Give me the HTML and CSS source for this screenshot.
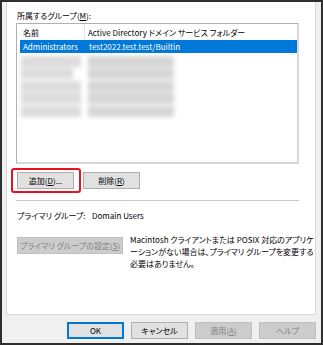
FILE: index.html
```html
<!DOCTYPE html>
<html lang="ja">
<head>
  <meta charset="UTF-8">
  <meta name="viewport" content="width=device-width, initial-scale=1.0">
  <title>所属するグループ</title>
  <link rel="stylesheet" href="styles.css">
</head>
<body>
  <div class="dialog">
    <div class="panel">
      <div class="field-label">所属するグループ(<u>M</u>):</div>

      <div class="listbox">
        <div class="list-head">
          <span class="col-name">名前</span>
          <span class="col-folder">Active Directory ドメイン サービス フォルダー</span>
        </div>
        <div class="list-row selected">
          <span class="col-name">Administrators</span>
          <span class="col-folder">test2022.test.test/Builtin</span>
        </div>
        <!-- redacted entries -->
        <div class="blurred">
          <div class="blur-row"><span class="blur-a"></span><span class="blur-b"></span></div>
          <div class="blur-row"><span class="blur-a short"></span><span class="blur-b"></span></div>
          <div class="blur-row"><span class="blur-a"></span><span class="blur-b"></span></div>
          <div class="blur-row"><span class="blur-a"></span><span class="blur-b"></span></div>
          <div class="blur-row"><span class="blur-a"></span><span class="blur-b"></span></div>
        </div>
      </div>

      <div class="member-actions">
        <span class="highlight-wrap">
          <button class="btn">追加(<u>D</u>)...</button>
          <span class="highlight"></span>
        </span>
        <button class="btn">削除(<u>R</u>)</button>
      </div>

      <div class="separator"></div>

      <div class="primary-row">
        <span class="primary-label">プライマリ グループ:</span>
        <span>Domain Users</span>
      </div>

      <div class="primary-set">
        <button class="btn btn-disabled btn-wide">プライマリ グループの設定(<u>S</u>)</button>
        <p class="note">Macintosh クライアントまたは POSIX 対応のアプリケ<br>ーションがない場合は、プライマリ グループを変更する<br>必要はありません。</p>
      </div>
    </div>

    <div class="dialog-buttons">
      <button class="btn btn-default">OK</button>
      <button class="btn">キャンセル</button>
      <button class="btn btn-disabled">適用(<u>A</u>)</button>
      <button class="btn btn-disabled">ヘルプ</button>
    </div>
  </div>
</body>
</html>
```

FILE: styles.css
```css
* {
  box-sizing: border-box;
}

body {
  margin: 0;
  background: #2e2e2e;
  font-family: 'Noto Sans CJK JP', 'Noto Sans', sans-serif;
  font-size: 8px;
  font-feature-settings: "palt";
  color: #000;
}

.dialog {
  margin: 2px;
  width: 319px;
  height: 341px;
  background: #f0f0f0;
  overflow: hidden;
}

.panel {
  margin-left: 4px;
  width: 310px;
  height: 313px;
  background: #fff;
  border: 1px solid #d9d9d9;
  border-top: none;
  padding-left: 9px;
}

.field-label {
  padding-top: 8px;
  padding-left: 1px;
  height: 19px;
  line-height: 12px;
  margin-bottom: 2px;
}

.listbox {
  width: 283px;
  height: 141px;
  border: 1px solid #b0b0b0;
  border-right: 2px solid #d7d7d7;
  border-bottom: 2px solid #d7d7d7;
}

.list-head {
  display: flex;
  height: 16px;
  line-height: 18px;
}

.list-head .col-name {
  width: 68px;
  padding-left: 6px;
  border-right: 1px solid #e5e5e5;
}

.list-head .col-folder {
  padding-left: 3px;
}

.list-row {
  display: flex;
  height: 13px;
  line-height: 13px;
  margin-left: 3px;
}

.list-row.selected {
  background: #0078d7;
  color: #fff;
}

.list-row .col-name {
  width: 66px;
  padding-left: 3px;
}

.list-row .col-folder {
  padding-left: 3px;
}

.blurred {
  margin-top: 2px;
  margin-left: 4px;
  filter: blur(2px);
}

.blur-row {
  display: flex;
  height: 12.5px;
  align-items: center;
}

.blur-a,
.blur-b {
  display: block;
  height: 11px;
  background: #dcdcdc;
}

.blur-a {
  width: 60px;
}

.blur-a.short {
  width: 52px;
  margin-right: 8px;
}

.blur-b {
  width: 86px;
  margin-left: 7px;
  background: #d6d6d6;
}

.member-actions {
  display: flex;
  gap: 9px;
  margin-top: 8px;
  padding-left: 1px;
}

.highlight-wrap {
  position: relative;
  display: block;
}

.highlight {
  position: absolute;
  left: -6px;
  top: -4px;
  width: 70px;
  height: 25px;
  border: 2px solid #e81123;
  border-radius: 3px;
}

.btn {
  display: block;
  width: 57px;
  height: 17px;
  padding: 0;
  margin: 0;
  font-family: inherit;
  font-size: 8px;
  font-feature-settings: "palt";
  line-height: 15px;
  white-space: nowrap;
  color: #000;
  background: #e1e1e1;
  border: 1px solid #adadad;
}

.btn-default {
  border-color: #0078d7;
  box-shadow: inset 0 0 0 1px #0078d7;
}

.btn-disabled {
  background: #cccccc;
  border-color: #bfbfbf;
  color: #838383;
}

.btn-wide {
  width: 106px;
  flex: none;
}

.separator {
  width: 283px;
  margin-top: 11px;
  border-top: 1px solid #c8c8c8;
}

.primary-row {
  display: flex;
  margin-top: 9px;
  height: 12px;
  line-height: 12px;
  padding-left: 1px;
  white-space: nowrap;
}

.primary-label {
  width: 75px;
  flex: none;
}

.primary-set {
  display: flex;
  align-items: flex-start;
  gap: 7px;
  margin-top: 12px;
  padding-left: 1px;
}

.primary-set .btn {
  margin-top: 3px;
}

.note {
  margin: 0;
  line-height: 12px;
  white-space: nowrap;
}

.dialog-buttons {
  display: flex;
  justify-content: flex-end;
  gap: 7px;
  margin-top: 7px;
  padding-right: 5px;
}
```
